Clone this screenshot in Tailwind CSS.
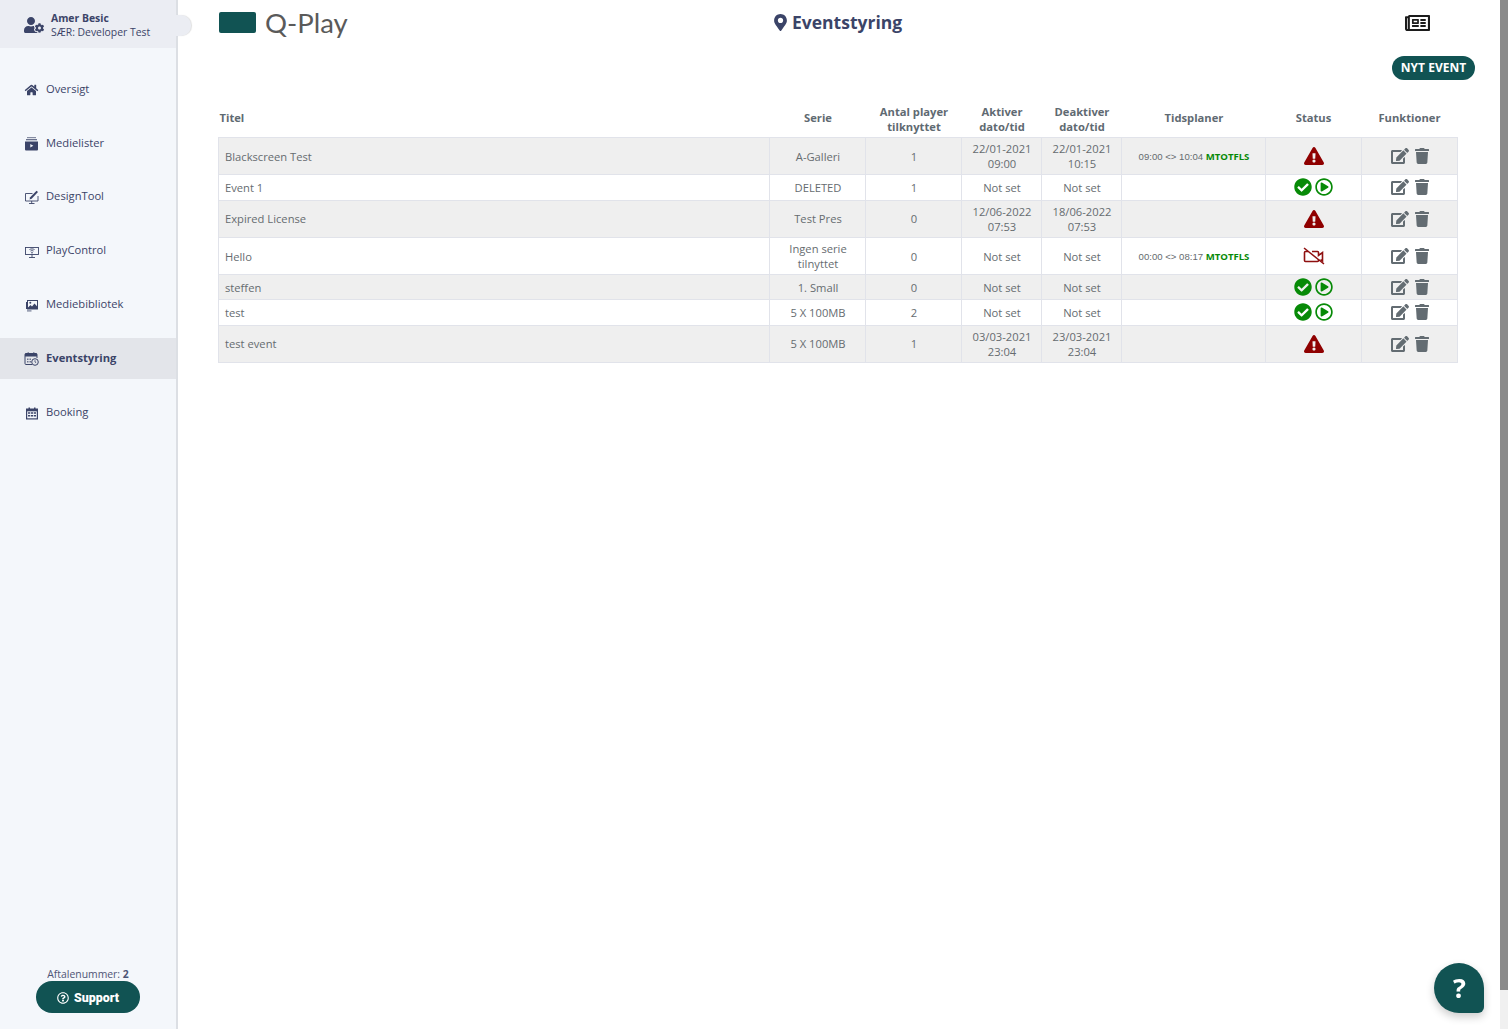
<!DOCTYPE html>
<html lang="da"><head><meta charset="utf-8"><title>Eventstyring</title>
<script src="https://cdn.jsdelivr.net/npm/@tailwindcss/browser@4"></script></head>
<body class="bg-white font-['Open_Sans',sans-serif] overflow-hidden">
<svg class="hidden"><defs>
<symbol id="tri" viewBox="0 0 576 512"><path fill="currentColor" d="M569.517 440.013C587.975 472.007 564.806 512 527.94 512H48.054c-36.937 0-59.999-40.055-41.577-71.987L246.423 23.985c18.467-32.009 64.72-31.951 83.154 0l239.94 416.028zM288 354c-25.405 0-46 20.595-46 46s20.595 46 46 46 46-20.595 46-46-20.595-46-46-46zm-43.673-165.346l7.418 136c.347 6.364 5.609 11.346 11.982 11.346h48.546c6.373 0 11.635-4.982 11.982-11.346l7.418-136c.375-6.874-5.098-12.654-11.982-12.654h-63.383c-6.884 0-12.356 5.78-11.981 12.654z"/></symbol>
<symbol id="chk" viewBox="0 0 512 512"><path fill="currentColor" d="M504 256c0 136.967-111.033 248-248 248S8 392.967 8 256 119.033 8 256 8s248 111.033 248 248zM227.314 387.314l184-184c6.248-6.248 6.248-16.379 0-22.627l-22.627-22.627c-6.248-6.249-16.379-6.249-22.628 0L216 308.118l-70.059-70.059c-6.248-6.248-16.379-6.248-22.628 0l-22.627 22.627c-6.248 6.248-6.248 16.379 0 22.627l104 104c6.249 6.249 16.379 6.249 22.628.001z"/></symbol>
<symbol id="play" viewBox="0 0 512 512"><path fill="currentColor" d="M371.7 238l-176-107c-15.8-8.8-35.7 2.5-35.7 21v208c0 18.4 19.8 29.8 35.7 21l176-101c16.4-9.1 16.4-32.8 0-42zM504 256C504 119 393 8 256 8S8 119 8 256s111 248 248 248 248-111 248-248zm-448 0c0-110.5 89.5-200 200-200s200 89.5 200 200-89.5 200-200 200S56 366.5 56 256z"/></symbol>
<symbol id="edit" viewBox="0 0 576 512"><path fill="currentColor" d="M402.6 83.2l90.2 90.2c3.8 3.8 3.8 10 0 13.8L274.4 405.6l-92.8 10.3c-12.4 1.4-22.9-9.1-21.5-21.5l10.3-92.8L388.8 83.2c3.8-3.8 10-3.8 13.8 0zm162-22.9l-48.8-48.8c-15.2-15.2-39.9-15.2-55.2 0l-35.4 35.4c-3.8 3.8-3.8 10 0 13.8l90.2 90.2c3.8 3.8 10 3.8 13.8 0l35.4-35.4c15.2-15.3 15.2-40 0-55.2zM384 346.2V448H64V128h229.8c3.2 0 6.2-1.3 8.5-3.5l40-40c7.6-7.6 2.2-20.5-8.5-20.5H48C21.5 64 0 85.5 0 112v352c0 26.5 21.5 48 48 48h352c26.5 0 48-21.5 48-48V306.2c0-10.7-12.9-16-20.5-8.5l-40 40c-2.2 2.3-3.5 5.3-3.5 8.5z"/></symbol>
<symbol id="trash" viewBox="0 0 448 512"><path fill="currentColor" d="M432 32H312l-9.4-18.7A24 24 0 0 0 281.1 0H166.8a23.72 23.72 0 0 0-21.4 13.3L136 32H16A16 16 0 0 0 0 48v32a16 16 0 0 0 16 16h416a16 16 0 0 0 16-16V48a16 16 0 0 0-16-16zM53.2 467a48 48 0 0 0 47.9 45h245.8a48 48 0 0 0 47.9-45L416 128H32z"/></symbol>
</defs></svg>

<div class="flex h-[1029px] w-[1508px]">
  <!-- Sidebar -->
  <aside class="relative flex h-full w-[178px] shrink-0 flex-col border-r-2 border-[#dcdfe4] bg-[#f4f7fb] text-[#3b4468]">
    <div class="flex h-[48px] items-center gap-[7px] bg-[#ebedf3] pl-[24px]">
      <svg class="mt-[2px] h-[16px] w-[20px]" viewBox="0 0 640 512"><path fill="currentColor" d="M610.5 373.3c2.6-14.1 2.6-28.5 0-42.6l25.8-14.9c3-1.7 4.3-5.2 3.3-8.5-6.7-21.6-18.2-41.2-33.2-57.4-2.3-2.5-6-3.1-9-1.4l-25.8 14.9c-10.9-9.3-23.4-16.5-36.9-21.3v-29.8c0-3.4-2.4-6.4-5.7-7.1-22.3-5-45-4.8-66.2 0-3.3.7-5.7 3.7-5.7 7.1v29.8c-13.5 4.8-26 12-36.9 21.3l-25.8-14.9c-2.9-1.7-6.7-1.1-9 1.4-15 16.2-26.5 35.8-33.2 57.4-1 3.3.4 6.8 3.3 8.5l25.8 14.9c-2.6 14.1-2.6 28.5 0 42.6l-25.8 14.9c-3 1.7-4.3 5.2-3.3 8.5 6.7 21.6 18.2 41.1 33.2 57.4 2.3 2.5 6 3.1 9 1.4l25.8-14.9c10.9 9.3 23.4 16.5 36.9 21.3v29.8c0 3.4 2.4 6.4 5.7 7.1 22.3 5 45 4.8 66.2 0 3.3-.7 5.7-3.7 5.7-7.1v-29.8c13.5-4.8 26-12 36.9-21.3l25.8 14.9c2.9 1.7 6.7 1.1 9-1.4 15-16.2 26.5-35.8 33.2-57.4 1-3.3-.4-6.8-3.3-8.5l-25.8-14.9zM496 400.5c-26.8 0-48.5-21.8-48.5-48.5s21.8-48.5 48.5-48.5 48.5 21.8 48.5 48.5-21.7 48.5-48.5 48.5zM224 256c70.7 0 128-57.3 128-128S294.7 0 224 0 96 57.3 96 128s57.3 128 128 128zm201.2 226.5c-2.3-1.2-4.6-2.6-6.8-3.9l-7.9 4.6c-6 3.4-12.8 5.3-19.6 5.3-10.9 0-21.4-4.6-28.9-12.6-18.3-19.8-32.3-43.9-40.2-69.6-5.5-17.7 1.9-36.4 17.9-45.7l7.9-4.6c-.1-2.6-.1-5.2 0-7.8l-7.9-4.6c-16-9.2-23.4-28-17.9-45.7.9-2.9 2.2-5.8 3.2-8.7-3.8-.3-7.5-1.2-11.4-1.2h-16.7c-22.2 10.2-46.9 16-72.9 16s-50.6-5.8-72.9-16h-16.7C60.2 288 0 348.2 0 422.4V464c0 26.5 21.5 48 48 48h352c10.1 0 19.5-3.2 27.2-8.5-1.2-3.8-2-7.7-2-11.8v-9.2z"/></svg>
      <div class="mt-[1.500px] text-[10.4px] leading-[14px]"><div class="font-bold">Amer Besic</div><div>SÆR: Developer Test</div></div>
    </div>
    <div class="absolute left-[176px] top-[15px] h-[21px] w-[15px] rounded-r-[10px] bg-[#ebedf3] shadow-[1px_0_1px_rgba(0,0,0,0.12)]"></div>

    <nav class="mt-[21px] flex flex-col gap-[13px] text-[11.2px]">
      <a class="flex h-[41px] items-center gap-[7px] pl-[24px]"><svg class="h-[12px] w-[15px]" viewBox="0 0 576 512"><path fill="currentColor" d="M280.37 148.26L96 300.11V464a16 16 0 0 0 16 16l112.06-.29a16 16 0 0 0 15.92-16V368a16 16 0 0 1 16-16h64a16 16 0 0 1 16 16v95.64a16 16 0 0 0 16 16.05L464 480a16 16 0 0 0 16-16V300L295.67 148.26a12.19 12.19 0 0 0-15.3 0zM571.6 251.47L488 182.56V44.05a12 12 0 0 0-12-12h-56a12 12 0 0 0-12 12v72.61L318.47 43a48 48 0 0 0-61 0L4.34 251.47a12 12 0 0 0-1.6 16.9l25.5 31A12 12 0 0 0 45.15 301l235.22-193.74a12.19 12.19 0 0 1 15.3 0L530.9 301a12 12 0 0 0 16.9-1.6l25.5-31a12 12 0 0 0-1.7-16.93z"/></svg>Oversigt</a>
      <a class="flex h-[41px] items-center gap-[7px] pl-[24px]"><svg class="h-[15px] w-[15px]" viewBox="0 0 15 15"><rect x="3" y="1" width="9" height="1.200" fill="currentColor" opacity=".6"/><rect x="2" y="3" width="11" height="1.300" fill="currentColor" opacity=".75"/><path fill="currentColor" d="M1 5.500h13v8a1 1 0 0 1-1 1H2a1 1 0 0 1-1-1z"/><path fill="#f4f7fb" d="M6.300 8l3 1.800-3 1.800z"/></svg>Medielister</a>
      <a class="-mt-[1px] flex h-[41px] items-center gap-[7px] pl-[24px]"><svg class="h-[15px] w-[15px]" viewBox="0 0 15 15" fill="none" stroke="currentColor"><path stroke-width=".9" d="M8.500 4.500H1.500v7.500h12.500V7"/><path stroke-width=".9" d="M5 14.500h5.500M7.700 12v2.500"/><path fill="currentColor" stroke="none" d="M5.500 10.500l.7-2.300 6.300-6.500 1.500 1.400-6.300 6.600z"/></svg>DesignTool</a>
      <a class="flex h-[41px] items-center gap-[7px] pl-[24px]"><svg class="h-[15px] w-[15px]" viewBox="0 0 15 15" fill="none" stroke="currentColor"><rect x="1.500" y="4.500" width="13" height="7" stroke-width=".9"/><path stroke-width=".9" d="M5 14.500h6M8 11.500v3M5.500 6.500c1.500-.8 3.500-.8 5 0M6.500 8c.9-.5 2.100-.5 3 0"/><circle cx="8" cy="9.700" r=".8" fill="currentColor" stroke="none"/></svg>PlayControl</a>
      <a class="flex h-[41px] items-center gap-[7px] pl-[24px]"><svg class="h-[15px] w-[15px]" viewBox="0 0 15 15"><path fill="currentColor" d="M2 5h1.200v7H2z"/><path fill="currentColor" d="M3 3h11v9.500H3z"/><path fill="#f4f7fb" d="M4 4h9v5.200L10.500 6.500 8 9.500 6.500 8 4 10.500z"/><circle cx="6.300" cy="5.800" r="1" fill="currentColor"/><path fill="currentColor" opacity=".7" d="M3 13.300h4.500v1.200H3z"/></svg>Mediebibliotek</a>
      <a class="flex h-[41px] items-center gap-[7px] bg-[#e3e5ea] pl-[24px] font-bold"><svg class="h-[15px] w-[15px]" viewBox="0 0 15 15"><path fill="none" stroke="currentColor" stroke-width="1" d="M8 13.500H2a1 1 0 0 1-1-1V3.500a1 1 0 0 1 1-1h10a1 1 0 0 1 1 1V7"/><path fill="currentColor" d="M1 2.500h12v3H1zM3.500 1.500h1.500v2H3.500zM9 1.500h1.500v2H9z"/><path fill="currentColor" opacity=".7" d="M3 7.500h1.500V9H3zM5.500 7.500H7V9H5.500zM3 10h1.500v1.500H3zM5.500 10H7v1.500H5.500z"/><circle cx="11" cy="11" r="3.300" fill="#e3e5ea" stroke="currentColor"/><path fill="none" stroke="currentColor" stroke-width=".8" d="M11 9.200V11l1.200.8"/></svg>Eventstyring</a>
      <a class="flex h-[41px] items-center gap-[7px] pl-[24px]"><svg class="h-[15px] w-[15px]" viewBox="0 0 15 15"><path fill="currentColor" d="M2 3.500h12v11H2zM4.500 2.500H6v2H4.500zM10 2.500h1.500v2H10z"/><path fill="#f4f7fb" d="M3.200 6.300h9.600v7H3.200z"/><path fill="currentColor" d="M4 7.200h2.200v1.600H4zM6.900 7.200h2.200v1.600H6.900zM9.800 7.200H12v1.600H9.800zM4 9.900h2.200v1.600H4zM6.900 9.900h2.200v1.600H6.900zM9.800 9.900H12v1.600H9.800z"/></svg>Booking</a>
    </nav>

    <div class="mt-auto mb-[16px] flex flex-col items-center">
      <div class="text-[10.4px] leading-[14px] opacity-90">Aftalenummer: <b>2</b></div>
      <a class="flex h-[32px] w-[104px] items-center justify-center gap-[5px] rounded-full bg-[#115353] pt-[2px] font-['Roboto',sans-serif] text-[12.400px] font-black text-white">
        <svg class="h-[12px] w-[12px]" viewBox="0 0 512 512"><path fill="currentColor" d="M256 8C119.043 8 8 119.083 8 256c0 136.997 111.043 248 248 248s248-111.003 248-248C504 119.083 392.957 8 256 8zm0 448c-110.532 0-200-89.431-200-200 0-110.495 89.472-200 200-200 110.491 0 200 89.471 200 200 0 110.53-89.431 200-200 200zm107.244-255.2c0 67.052-72.421 68.084-72.421 92.863V300c0 6.627-5.373 12-12 12h-45.647c-6.627 0-12-5.373-12-12v-8.659c0-35.745 27.1-50.034 47.579-61.516 17.561-9.845 28.324-16.541 28.324-29.579 0-17.246-21.999-28.693-39.784-28.693-23.189 0-33.894 10.977-48.942 29.969-4.057 5.12-11.46 6.071-16.666 2.124l-27.824-21.098c-5.107-3.872-6.251-11.066-2.644-16.363C184.846 131.491 214.94 112 261.794 112c49.071 0 101.45 38.304 101.45 88.8zM298 368c0 23.159-18.841 42-42 42s-42-18.841-42-42 18.841-42 42-42 42 18.841 42 42z"/></svg>
        Support</a>
    </div>
  </aside>

  <!-- Main -->
  <main class="flex h-full w-[1322px] shrink-0 flex-col pl-[40px]">
    <header class="relative flex h-[46px] items-center">
      <div class="flex items-center gap-[9px]">
        <div class="ml-[1px] -mt-[1px] h-[21px] w-[37px] rounded-[2px] bg-[#115353]"></div>
        <span class="font-['Lato',sans-serif] text-[27.500px] leading-none text-[#5a5a5a]">Q-Play</span>
      </div>
      <div class="absolute left-[556px] -mt-[1px] flex items-center gap-[5px] text-[17.500px] font-bold text-[#3b4468]">
        <svg class="h-[17px] w-[13px]" viewBox="0 0 384 512"><path fill="currentColor" d="M172.268 501.67C26.97 291.031 0 269.413 0 192 0 85.961 85.961 0 192 0s192 85.961 192 192c0 77.413-26.97 99.031-172.268 309.67-9.535 13.774-29.93 13.773-39.464 0zM192 272c44.183 0 80-35.817 80-80s-35.817-80-80-80-80 35.817-80 80 35.817 80 80 80z"/></svg>
        Eventstyring</div>
      <svg class="absolute left-[1187px] h-[16px] w-[25px]" viewBox="0 64 576 384" preserveAspectRatio="none"><path fill="#1c1c1c" d="M552 64H112c-20.858 0-38.643 13.377-45.248 32H24c-13.255 0-24 10.745-24 24v272c0 30.928 25.072 56 56 56h496c13.255 0 24-10.745 24-24V88c0-13.255-10.745-24-24-24zM48 392V144h16v248c0 4.411-3.589 8-8 8s-8-3.589-8-8zm480 8H111.422c.374-2.614.578-5.283.578-8V112h416v288zM172 280h136c6.627 0 12-5.373 12-12v-96c0-6.627-5.373-12-12-12H172c-6.627 0-12 5.373-12 12v96c0 6.627 5.373 12 12 12zm28-80h80v40h-80v-40zm-40 140v-24c0-6.627 5.373-12 12-12h136c6.627 0 12 5.373 12 12v24c0 6.627-5.373 12-12 12H172c-6.627 0-12-5.373-12-12zm192 0v-24c0-6.627 5.373-12 12-12h104c6.627 0 12 5.373 12 12v24c0 6.627-5.373 12-12 12H364c-6.627 0-12-5.373-12-12zm0-144v-24c0-6.627 5.373-12 12-12h104c6.627 0 12 5.373 12 12v24c0 6.627-5.373 12-12 12H364c-6.627 0-12-5.373-12-12zm0 72v-24c0-6.627 5.373-12 12-12h104c6.627 0 12 5.373 12 12v24c0 6.627-5.373 12-12 12H364c-6.627 0-12-5.373-12-12z"/></svg>
    </header>

    <div class="mt-[10px] flex h-[24px] justify-end pr-[25px]">
      <a class="flex h-[24px] w-[83px] items-center justify-center rounded-full bg-[#115353] text-[12px] font-bold text-white">NYT EVENT</a>
    </div>

    <table class="mt-[24px] w-[1239px] table-fixed border-collapse text-center text-[11.200px] leading-[15px] text-[#666c70]">
      <colgroup><col class="w-[551px]"><col class="w-[96px]"><col class="w-[96px]"><col class="w-[80px]"><col class="w-[80px]"><col class="w-[144px]"><col class="w-[96px]"><col class="w-[96px]"></colgroup>
      <thead class="font-bold text-[#5f6a72]">
        <tr class="h-[33px]"><th class="pb-[5px] pl-[1px] text-left">Titel</th><th class="pb-[5px] pl-[1px]">Serie</th><th class="pb-[2px] pl-[1px]">Antal player<br>tilknyttet</th><th class="pb-[2px] pl-[1px]">Aktiver<br>dato/tid</th><th class="pb-[2px] pl-[1px]">Deaktiver<br>dato/tid</th><th class="pb-[5px] pl-[1px]">Tidsplaner</th><th class="pb-[5px]">Status</th><th class="pb-[5px]">Funktioner</th></tr>
      </thead>
      <tbody class="[&_td]:border [&_td]:border-[#e1e3ea] [&_td]:p-0 [&_td]:pt-[1px] [&_td]:pl-[1px]">
        <tr class="h-[37px] bg-[#efefef]"><td class="pl-[6px]! text-left">Blackscreen Test</td><td>A-Galleri</td><td>1</td><td>22/01-2021<br>09:00</td><td>22/01-2021<br>10:15</td>
          <td class="text-[9.600px]"><span class="font-['Liberation_Sans',sans-serif]">09:00 &lt;&gt; 10:04</span> <b class="text-[#078a07]">MTOTFLS</b></td>
          <td><svg class="mx-auto h-[18px] w-[20px] text-[#8f0000]"><use href="#tri"/></svg></td>
          <td><div class="flex items-center justify-center gap-[6px] text-[#636c72]"><svg class="h-[16px] w-[18px]"><use href="#edit"/></svg><svg class="h-[16px] w-[14px]"><use href="#trash"/></svg></div></td></tr>
        <tr class="h-[26px] bg-white"><td class="pl-[6px]! text-left">Event 1</td><td>DELETED</td><td>1</td><td>Not set</td><td>Not set</td><td></td>
          <td class="pt-0! pl-0!"><div class="flex items-center justify-center gap-[3px] text-[#078a07]"><svg class="h-[18px] w-[18px]"><use href="#chk"/></svg><svg class="h-[18px] w-[18px]"><use href="#play"/></svg></div></td>
          <td class="pt-0!"><div class="flex items-center justify-center gap-[6px] text-[#636c72]"><svg class="h-[16px] w-[18px]"><use href="#edit"/></svg><svg class="h-[16px] w-[14px]"><use href="#trash"/></svg></div></td></tr>
        <tr class="h-[37px] bg-[#efefef]"><td class="pl-[6px]! pt-0! text-left">Expired License</td><td class="pt-0!">Test Pres</td><td class="pt-0!">0</td><td>12/06-2022<br>07:53</td><td>18/06-2022<br>07:53</td><td></td>
          <td class="pt-0!"><svg class="mx-auto h-[18px] w-[20px] text-[#8f0000]"><use href="#tri"/></svg></td>
          <td class="pt-0!"><div class="flex items-center justify-center gap-[6px] text-[#636c72]"><svg class="h-[16px] w-[18px]"><use href="#edit"/></svg><svg class="h-[16px] w-[14px]"><use href="#trash"/></svg></div></td></tr>
        <tr class="h-[37px] bg-white"><td class="pl-[6px]! text-left">Hello</td><td>Ingen serie<br>tilnyttet</td><td>0</td><td>Not set</td><td>Not set</td>
          <td class="text-[9.600px]"><span class="font-['Liberation_Sans',sans-serif]">00:00 &lt;&gt; 08:17</span> <b class="text-[#078a07]">MTOTFLS</b></td>
          <td class="pt-0!"><svg class="mx-auto h-[18px] w-[22px] text-[#8f1010]" viewBox="0 0 22 18" fill="none" stroke="currentColor"><path stroke-width="1.600" d="M5 4.500H2.500a1 1 0 0 0-1 1v8a1 1 0 0 0 1 1h12a1 1 0 0 0 1-1V12M9 4.500h5.500a1 1 0 0 1 1 1v3l4-3v8.500l-2-1.300"/><path stroke-width="1.500" d="M1 1l20 16"/></svg></td>
          <td><div class="flex items-center justify-center gap-[6px] text-[#636c72]"><svg class="h-[16px] w-[18px]"><use href="#edit"/></svg><svg class="h-[16px] w-[14px]"><use href="#trash"/></svg></div></td></tr>
        <tr class="h-[25px] bg-[#efefef]"><td class="pl-[6px]! text-left">steffen</td><td>1. Small</td><td>0</td><td>Not set</td><td>Not set</td><td></td>
          <td class="pl-0!"><div class="flex items-center justify-center gap-[3px] text-[#078a07]"><svg class="h-[18px] w-[18px]"><use href="#chk"/></svg><svg class="h-[18px] w-[18px]"><use href="#play"/></svg></div></td>
          <td><div class="flex items-center justify-center gap-[6px] text-[#636c72]"><svg class="h-[16px] w-[18px]"><use href="#edit"/></svg><svg class="h-[16px] w-[14px]"><use href="#trash"/></svg></div></td></tr>
        <tr class="h-[26px] bg-white"><td class="pl-[6px]! text-left">test</td><td>5 X 100MB</td><td>2</td><td>Not set</td><td>Not set</td><td></td>
          <td class="pt-0! pl-0!"><div class="flex items-center justify-center gap-[3px] text-[#078a07]"><svg class="h-[18px] w-[18px]"><use href="#chk"/></svg><svg class="h-[18px] w-[18px]"><use href="#play"/></svg></div></td>
          <td class="pt-0!"><div class="flex items-center justify-center gap-[6px] text-[#636c72]"><svg class="h-[16px] w-[18px]"><use href="#edit"/></svg><svg class="h-[16px] w-[14px]"><use href="#trash"/></svg></div></td></tr>
        <tr class="h-[37px] bg-[#efefef]"><td class="pl-[6px]! pt-0! text-left">test event</td><td class="pt-0!">5 X 100MB</td><td class="pt-0!">1</td><td>03/03-2021<br>23:04</td><td>23/03-2021<br>23:04</td><td></td>
          <td class="pt-0!"><svg class="mx-auto h-[18px] w-[20px] text-[#8f0000]"><use href="#tri"/></svg></td>
          <td class="pt-0!"><div class="flex items-center justify-center gap-[6px] text-[#636c72]"><svg class="h-[16px] w-[18px]"><use href="#edit"/></svg><svg class="h-[16px] w-[14px]"><use href="#trash"/></svg></div></td></tr>
      </tbody>
    </table>
  </main>

  <!-- Page scrollbar -->
  <div class="flex h-full w-[8px] shrink-0 flex-col bg-[#f0f0f0]"><div class="h-[990px] bg-[#8a8a8a]"></div></div>
</div>
<a class="fixed left-[1434px] top-[963px] flex h-[50px] w-[50px] items-center justify-center rounded-[25px_25px_6px_25px] bg-[#115353] pl-[1px] text-[27px] font-bold text-white shadow-[0_4px_8px_rgba(0,0,0,0.2)]">?</a>
</body></html>
